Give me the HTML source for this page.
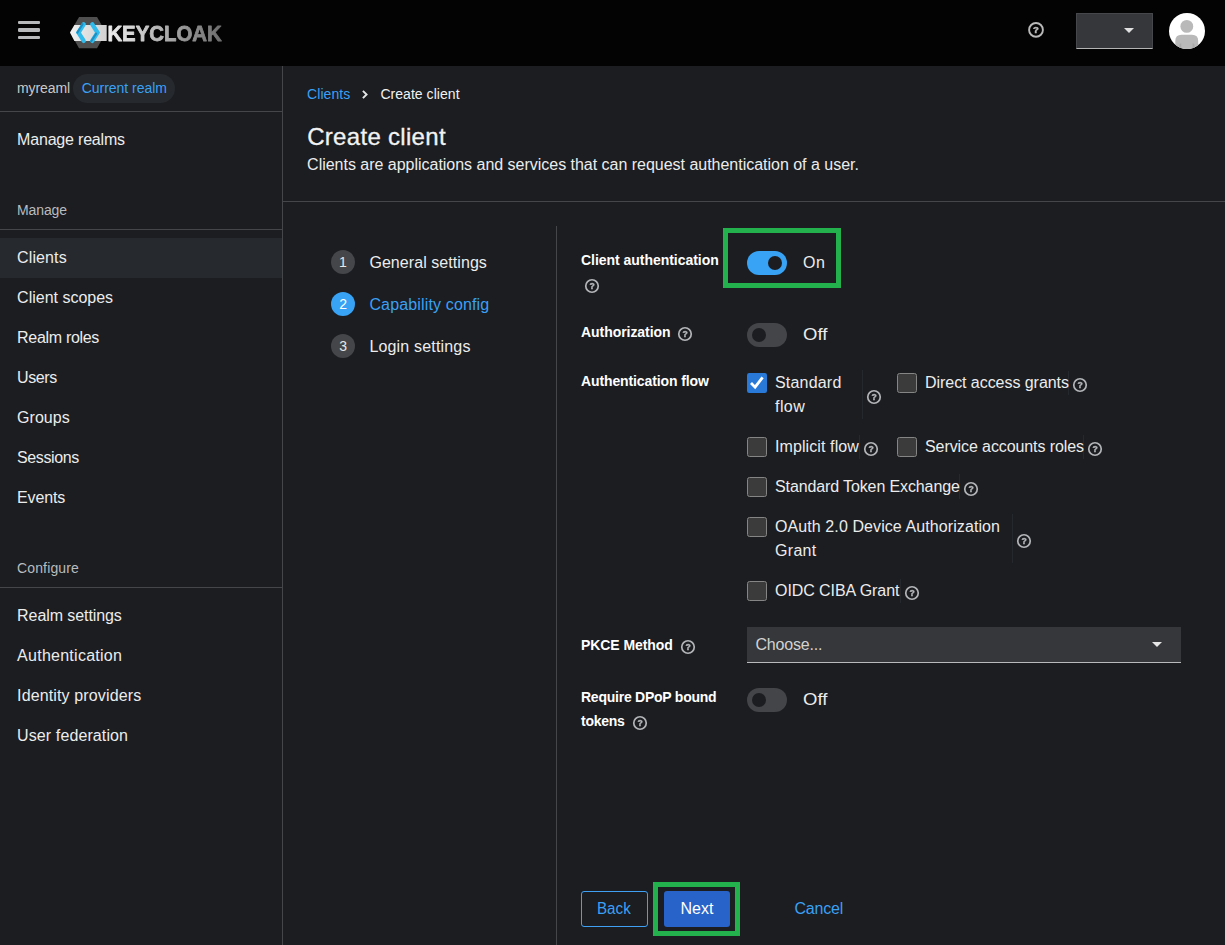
<!DOCTYPE html>
<html lang="en">
<head>
<meta charset="utf-8">
<title>Keycloak - Create client</title>
<style>
*{box-sizing:border-box;margin:0;padding:0}
html,body{width:1225px;height:945px;overflow:hidden;background:#1b1d21}
body{font-family:"Liberation Sans",sans-serif;color:#ececec;position:relative;font-size:16px}
.abs{position:absolute;white-space:nowrap}
#header{position:absolute;left:0;top:0;width:1225px;height:66px;background:#030303}
.t{position:absolute;white-space:nowrap;line-height:24px;height:24px}
.hr{position:absolute;left:0;width:282px;height:1px;background:#44464a}
.cb{position:absolute;width:20px;height:20px;border:1px solid #858585;border-radius:2.5px;background:#3b3b3b}
.cb.on{border:0;background:#2879d8;border-radius:2.2px}
.cb svg{position:absolute;left:0;top:0}
.sw{position:absolute;left:747px;width:40px;height:24px;border-radius:12px;background:#444548}
.sw i{position:absolute;left:5px;top:5px;width:14px;height:14px;border-radius:7px;background:#1b1d21}
.sw.on{background:#38a2f4}
.sw.on i{left:21px}
.green{position:absolute;border:5px solid #22b14c}
.g{will-change:transform}
</style>
</head>
<body>
<nav id="sidebar">
<div class="abs" style="left:282px;top:66px;width:1px;height:879px;background:#44464a"></div>
<div class="abs" style="left:73px;top:74px;width:102px;height:29px;border-radius:15px;background:#26292d"></div>
<div class="hr" style="top:111px"></div>
<div class="hr" style="top:229px"></div>
<div class="hr" style="top:587px"></div>
<div class="abs" style="left:0;top:238px;width:282px;height:40px;background:#26292d"></div>
<div class="t" style="left:17.00px;top:76.0px;font-size:14px;color:#c9c9c9;letter-spacing:-0.083px;">myreaml</div>
<div class="t" style="left:81.80px;top:76.0px;font-size:14px;color:#3aa0f5;letter-spacing:-0.041px;">Current realm</div>
<div class="t" style="left:17.10px;top:127.5px;font-size:16px;color:#ececec;letter-spacing:-0.193px;">Manage realms</div>
<div class="t" style="left:17.00px;top:198.0px;font-size:14px;color:#b9bbbe;letter-spacing:-0.103px;">Manage</div>
<div class="t" style="left:17.10px;top:245.5px;font-size:16px;color:#ececec;letter-spacing:0.109px;">Clients</div>
<div class="t" style="left:17.10px;top:285.5px;font-size:16px;color:#ececec;letter-spacing:-0.007px;">Client scopes</div>
<div class="t" style="left:17.10px;top:325.5px;font-size:16px;color:#ececec;letter-spacing:-0.310px;">Realm roles</div>
<div class="t" style="left:17.10px;top:365.5px;font-size:16px;color:#ececec;letter-spacing:-0.405px;">Users</div>
<div class="t" style="left:17.10px;top:405.5px;font-size:16px;color:#ececec;letter-spacing:0.018px;">Groups</div>
<div class="t" style="left:17.10px;top:445.5px;font-size:16px;color:#ececec;letter-spacing:-0.395px;">Sessions</div>
<div class="t" style="left:17.10px;top:485.5px;font-size:16px;color:#ececec;letter-spacing:-0.171px;">Events</div>
<div class="t" style="left:17.10px;top:603.5px;font-size:16px;color:#ececec;letter-spacing:-0.082px;">Realm settings</div>
<div class="t" style="left:17.10px;top:643.5px;font-size:16px;color:#ececec;letter-spacing:0.259px;">Authentication</div>
<div class="t" style="left:17.10px;top:683.5px;font-size:16px;color:#ececec;letter-spacing:0.131px;">Identity providers</div>
<div class="t" style="left:17.10px;top:723.5px;font-size:16px;color:#ececec;letter-spacing:0.106px;">User federation</div>
<div class="t" style="left:17.00px;top:555.8px;font-size:14px;color:#b9bbbe;letter-spacing:0.147px;">Configure</div>
</nav>
<main id="main">
<section id="pagehead">
<div class="abs" style="left:283px;top:201px;width:942px;height:1px;background:#44464a"></div>
<svg class="abs" style="left:360px;top:88px" width="10" height="13" viewBox="0 0 10 13"><polyline points="2.9,2.8 6.6,6.5 2.9,10.2" fill="none" stroke="#e6e6e6" stroke-width="1.9"/></svg>
<div class="t" style="left:307.10px;top:82.3px;font-size:14px;color:#3aa0f5;letter-spacing:0.050px;">Clients</div>
<div class="t" style="left:380.40px;top:82.3px;font-size:14px;color:#f2f2f2;letter-spacing:0.046px;">Create client</div>
<div class="t" style="left:307.20px;top:125.4px;font-size:24px;color:#f2f2f2;letter-spacing:0.303px;-webkit-text-stroke:0.3px #f2f2f2;">Create client</div>
<div class="t" style="left:307.10px;top:152.6px;font-size:16px;color:#ececec;letter-spacing:-0.018px;">Clients are applications and services that can request authentication of a user.</div>
</section>
<section id="wizardnav">
<div class="abs" style="left:556px;top:226px;width:1px;height:719px;background:#44464a"></div>
<div class="abs" style="left:331px;top:250px;width:24px;height:24px;border-radius:12px;background:#45464a"></div>
<div class="abs" style="left:331px;top:292px;width:24px;height:24px;border-radius:12px;background:#38a2f4"></div>
<div class="abs" style="left:331px;top:334px;width:24px;height:24px;border-radius:12px;background:#45464a"></div>
<div class="t" style="left:369.40px;top:250.5px;font-size:16px;color:#ececec;letter-spacing:0.063px;">General settings</div>
<div class="t" style="left:369.40px;top:292.5px;font-size:16px;color:#3aa0f5;letter-spacing:0.149px;">Capability config</div>
<div class="t" style="left:369.40px;top:334.5px;font-size:16px;color:#ececec;letter-spacing:0.179px;">Login settings</div>
<div class="t" style="left:339.01px;top:250.0px;font-size:14px;color:#e6e6e6;">1</div>
<div class="t" style="left:339.21px;top:292.0px;font-size:14px;color:#ffffff;">2</div>
<div class="t" style="left:339.21px;top:334.0px;font-size:14px;color:#e6e6e6;">3</div>
</section>
<section id="form">
<div class="green" style="left:723px;top:228px;width:118px;height:60px"></div>
<div class="sw on" style="top:251px"><i></i></div>
<div class="sw" style="top:323px"><i></i></div>
<div class="sw" style="top:688px"><i></i></div>
<div class="cb on" style="left:747px;top:373px"><svg width="20" height="20" viewBox="0 0 20 20"><polyline points="4.0,10.1 8.1,14.2 15.6,4.3" fill="none" stroke="#fff" stroke-width="2.8"/></svg></div>
<div class="cb" style="left:897px;top:373px"></div>
<div class="cb" style="left:747px;top:437px"></div>
<div class="cb" style="left:897px;top:437px"></div>
<div class="cb" style="left:747px;top:477px"></div>
<div class="cb" style="left:747px;top:517px"></div>
<div class="cb" style="left:747px;top:581px"></div>
<div class="abs" style="left:862px;top:370px;width:1px;height:49px;background:#25282d"></div>
<div class="abs" style="left:1068px;top:371px;width:1px;height:24px;background:#25282d"></div>
<div class="abs" style="left:859px;top:435px;width:1px;height:24px;background:#25282d"></div>
<div class="abs" style="left:1083px;top:435px;width:1px;height:24px;background:#25282d"></div>
<div class="abs" style="left:959px;top:474px;width:1px;height:25px;background:#25282d"></div>
<div class="abs" style="left:1012px;top:514px;width:1px;height:49px;background:#25282d"></div>
<div class="abs" style="left:900px;top:579px;width:1px;height:24px;background:#25282d"></div>
<div class="abs" style="left:747px;top:627px;width:434px;height:36px;background:#36373a;border-bottom:1px solid #b8babc"></div>
<div class="abs" style="left:1152px;top:642px;width:0;height:0;border-left:5.2px solid transparent;border-right:5.2px solid transparent;border-top:5.6px solid #e6e6e6"></div>
<div class="t" style="left:581.00px;top:248.2px;font-size:14px;font-weight:bold;color:#ffffff;letter-spacing:-0.035px;">Client authentication</div>
<div class="t" style="left:581.00px;top:320.2px;font-size:14px;font-weight:bold;color:#ffffff;letter-spacing:-0.055px;">Authorization</div>
<div class="t" style="left:581.00px;top:369.3px;font-size:14px;font-weight:bold;color:#ffffff;letter-spacing:-0.117px;">Authentication flow</div>
<div class="t" style="left:581.00px;top:633.2px;font-size:14px;font-weight:bold;color:#ffffff;letter-spacing:-0.073px;">PKCE Method</div>
<div class="t" style="left:581.00px;top:685.4px;font-size:14px;font-weight:bold;color:#ffffff;letter-spacing:-0.240px;">Require DPoP bound</div>
<div class="t" style="left:581.00px;top:709.4px;font-size:14px;font-weight:bold;color:#ffffff;letter-spacing:-0.244px;">tokens</div>
<div class="t" style="left:803.00px;top:250.6px;font-size:16px;color:#ececec;letter-spacing:0.435px;">On</div>
<div class="t" style="left:803.00px;top:322.6px;font-size:16px;color:#ececec;transform:scaleX(1.1574);transform-origin:0 50%;">Off</div>
<div class="t" style="left:803.00px;top:687.6px;font-size:16px;color:#ececec;transform:scaleX(1.1574);transform-origin:0 50%;">Off</div>
<div class="t" style="left:775.00px;top:370.5px;font-size:16px;color:#ececec;letter-spacing:0.192px;">Standard</div>
<div class="t" style="left:775.00px;top:394.5px;font-size:16px;color:#ececec;letter-spacing:0.434px;">flow</div>
<div class="t" style="left:925.00px;top:370.5px;font-size:16px;color:#ececec;letter-spacing:-0.051px;">Direct access grants</div>
<div class="t" style="left:775.00px;top:434.6px;font-size:16px;color:#ececec;letter-spacing:0.098px;">Implicit flow</div>
<div class="t" style="left:925.00px;top:434.6px;font-size:16px;color:#ececec;letter-spacing:-0.091px;">Service accounts roles</div>
<div class="t" style="left:775.00px;top:474.6px;font-size:16px;color:#ececec;letter-spacing:-0.115px;">Standard Token Exchange</div>
<div class="t" style="left:775.00px;top:514.6px;font-size:16px;color:#ececec;letter-spacing:0.091px;">OAuth 2.0 Device Authorization</div>
<div class="t" style="left:775.00px;top:538.6px;font-size:16px;color:#ececec;letter-spacing:0.307px;">Grant</div>
<div class="t" style="left:775.00px;top:578.6px;font-size:16px;color:#ececec;letter-spacing:-0.065px;">OIDC CIBA Grant</div>
<div class="t" style="left:755.40px;top:632.8px;font-size:16px;color:#d2d2d2;letter-spacing:-0.185px;">Choose...</div>
</section>
<footer id="wizardfooter">
<div class="green" style="left:653px;top:882px;width:87px;height:54px"></div>
<div class="abs" style="left:581px;top:891px;width:67px;height:36px;border:1px solid #3fa0f4;border-radius:3px"></div>
<div class="abs" style="left:664px;top:891px;width:66px;height:36px;background:#2763c9;border-radius:3px"></div>
<div class="t" style="left:597.40px;top:896.7px;font-size:16px;color:#3aa0f5;transform:scaleX(0.9481);transform-origin:0 50%;">Back</div>
<div class="t" style="left:680.40px;top:896.7px;font-size:16px;color:#ffffff;letter-spacing:0.082px;">Next</div>
<div class="t" style="left:794.40px;top:896.7px;font-size:16px;color:#3aa0f5;letter-spacing:-0.182px;">Cancel</div>
</footer>
<div id="helpicons">
<svg class="abs g" style="left:584.0px;top:278.0px" width="16" height="16" viewBox="0 0 16 16"><circle cx="8" cy="8" r="6.25" fill="none" stroke="#b3b5b8" stroke-width="1.7"/><text x="8" y="11.10" text-anchor="middle" font-family="Liberation Sans, sans-serif" font-weight="bold" font-size="8.6" fill="#b3b5b8" stroke="#b3b5b8" stroke-width="0.45">?</text></svg>
<svg class="abs g" style="left:677.0px;top:326.0px" width="16" height="16" viewBox="0 0 16 16"><circle cx="8" cy="8" r="6.25" fill="none" stroke="#b3b5b8" stroke-width="1.7"/><text x="8" y="11.10" text-anchor="middle" font-family="Liberation Sans, sans-serif" font-weight="bold" font-size="8.6" fill="#b3b5b8" stroke="#b3b5b8" stroke-width="0.45">?</text></svg>
<svg class="abs g" style="left:866.0px;top:389.0px" width="16" height="16" viewBox="0 0 16 16"><circle cx="8" cy="8" r="6.25" fill="none" stroke="#b3b5b8" stroke-width="1.7"/><text x="8" y="11.10" text-anchor="middle" font-family="Liberation Sans, sans-serif" font-weight="bold" font-size="8.6" fill="#b3b5b8" stroke="#b3b5b8" stroke-width="0.45">?</text></svg>
<svg class="abs g" style="left:1072.0px;top:377.0px" width="16" height="16" viewBox="0 0 16 16"><circle cx="8" cy="8" r="6.25" fill="none" stroke="#b3b5b8" stroke-width="1.7"/><text x="8" y="11.10" text-anchor="middle" font-family="Liberation Sans, sans-serif" font-weight="bold" font-size="8.6" fill="#b3b5b8" stroke="#b3b5b8" stroke-width="0.45">?</text></svg>
<svg class="abs g" style="left:863.0px;top:441.0px" width="16" height="16" viewBox="0 0 16 16"><circle cx="8" cy="8" r="6.25" fill="none" stroke="#b3b5b8" stroke-width="1.7"/><text x="8" y="11.10" text-anchor="middle" font-family="Liberation Sans, sans-serif" font-weight="bold" font-size="8.6" fill="#b3b5b8" stroke="#b3b5b8" stroke-width="0.45">?</text></svg>
<svg class="abs g" style="left:1087.0px;top:441.0px" width="16" height="16" viewBox="0 0 16 16"><circle cx="8" cy="8" r="6.25" fill="none" stroke="#b3b5b8" stroke-width="1.7"/><text x="8" y="11.10" text-anchor="middle" font-family="Liberation Sans, sans-serif" font-weight="bold" font-size="8.6" fill="#b3b5b8" stroke="#b3b5b8" stroke-width="0.45">?</text></svg>
<svg class="abs g" style="left:963.0px;top:481.0px" width="16" height="16" viewBox="0 0 16 16"><circle cx="8" cy="8" r="6.25" fill="none" stroke="#b3b5b8" stroke-width="1.7"/><text x="8" y="11.10" text-anchor="middle" font-family="Liberation Sans, sans-serif" font-weight="bold" font-size="8.6" fill="#b3b5b8" stroke="#b3b5b8" stroke-width="0.45">?</text></svg>
<svg class="abs g" style="left:1016.0px;top:533.0px" width="16" height="16" viewBox="0 0 16 16"><circle cx="8" cy="8" r="6.25" fill="none" stroke="#b3b5b8" stroke-width="1.7"/><text x="8" y="11.10" text-anchor="middle" font-family="Liberation Sans, sans-serif" font-weight="bold" font-size="8.6" fill="#b3b5b8" stroke="#b3b5b8" stroke-width="0.45">?</text></svg>
<svg class="abs g" style="left:904.0px;top:585.0px" width="16" height="16" viewBox="0 0 16 16"><circle cx="8" cy="8" r="6.25" fill="none" stroke="#b3b5b8" stroke-width="1.7"/><text x="8" y="11.10" text-anchor="middle" font-family="Liberation Sans, sans-serif" font-weight="bold" font-size="8.6" fill="#b3b5b8" stroke="#b3b5b8" stroke-width="0.45">?</text></svg>
<svg class="abs g" style="left:680.0px;top:639.0px" width="16" height="16" viewBox="0 0 16 16"><circle cx="8" cy="8" r="6.25" fill="none" stroke="#b3b5b8" stroke-width="1.7"/><text x="8" y="11.10" text-anchor="middle" font-family="Liberation Sans, sans-serif" font-weight="bold" font-size="8.6" fill="#b3b5b8" stroke="#b3b5b8" stroke-width="0.45">?</text></svg>
<svg class="abs g" style="left:632.0px;top:715.0px" width="16" height="16" viewBox="0 0 16 16"><circle cx="8" cy="8" r="6.25" fill="none" stroke="#b3b5b8" stroke-width="1.7"/><text x="8" y="11.10" text-anchor="middle" font-family="Liberation Sans, sans-serif" font-weight="bold" font-size="8.6" fill="#b3b5b8" stroke="#b3b5b8" stroke-width="0.45">?</text></svg>
</div>
</main>
<header id="header">
<!-- hamburger -->
<div class="abs" style="left:18.2px;top:20.8px;width:21.5px;height:3.3px;background:#b7b9bb;border-radius:1px"></div>
<div class="abs" style="left:18.2px;top:28.2px;width:21.5px;height:3.6px;background:#b7b9bb;border-radius:1.2px"></div>
<div class="abs" style="left:18.2px;top:35.8px;width:21.5px;height:3.3px;background:#b7b9bb;border-radius:1px"></div>
<!-- logo -->
<svg class="abs g" style="left:68px;top:14px" width="160" height="38" viewBox="0 0 160 38">
<defs>
<linearGradient id="band" x1="0" y1="0" x2="1" y2="0"><stop offset="0" stop-color="#f2f2f2"/><stop offset="0.5" stop-color="#dedede"/><stop offset="1" stop-color="#d2d2d2"/></linearGradient>
<linearGradient id="txt" gradientUnits="userSpaceOnUse" x1="40" y1="0" x2="154" y2="0"><stop offset="0" stop-color="#ececec"/><stop offset="0.25" stop-color="#cfcfcf"/><stop offset="0.6" stop-color="#a0a0a0"/><stop offset="1" stop-color="#6c6c6c"/></linearGradient>
</defs>
<polygon points="11.05,3.1 29.05,3.1 38,18.6 29.05,34.2 11.05,34.2 2.1,18.6" fill="#4f4f4f"/>
<polygon points="2,18.6 6.4,11 38.7,11 38.7,27.1 6.4,27.1" fill="url(#band)"/>
<polyline points="15.7,10.3 10.5,18.6 15.7,26.9" fill="none" stroke="#2fbbec" stroke-width="4.3" stroke-linecap="round" stroke-linejoin="miter"/>
<polyline points="14.6,10.1 9.3,18.6" fill="none" stroke="#1b8fc3" stroke-width="2" stroke-linecap="round"/>
<polyline points="24.3,10.3 29.5,18.6 24.3,26.9" fill="none" stroke="#2fbbec" stroke-width="4.3" stroke-linecap="round" stroke-linejoin="miter"/>
<polyline points="28.2,19.6 23.2,27.1" fill="none" stroke="#1b8fc3" stroke-width="2" stroke-linecap="round"/>
<text x="39.4" y="26.6" font-family="Liberation Sans, sans-serif" font-weight="bold" font-size="21.4" fill="url(#txt)" stroke="url(#txt)" stroke-width="0.8" stroke-linejoin="round" textLength="114.4" lengthAdjust="spacingAndGlyphs">KEYCLOAK</text>
</svg>
<!-- help -->
<svg class="abs g" style="left:1028px;top:22px" width="16" height="16" viewBox="0 0 16 16"><circle cx="8" cy="7.9" r="6.9" fill="none" stroke="#b9b9b9" stroke-width="1.9"/><text x="8" y="11.3" text-anchor="middle" font-family="Liberation Sans, sans-serif" font-weight="bold" font-size="9.5" fill="#b9b9b9" stroke="#b9b9b9" stroke-width="0.5">?</text></svg>
<!-- user dropdown -->
<div class="abs" style="left:1076px;top:13px;width:77px;height:36px;background:#36373a;border:1px solid #45474a;border-bottom-color:#b4b4b4"></div>
<div class="abs" style="left:1124px;top:28px;width:0;height:0;border-left:5px solid transparent;border-right:5px solid transparent;border-top:5px solid #e0e0e0"></div>
<!-- avatar -->
<svg class="abs" style="left:1169px;top:13px" width="36" height="36" viewBox="0 0 36 36"><defs><clipPath id="av"><circle cx="18" cy="18" r="18"/></clipPath></defs><circle cx="18" cy="18" r="18" fill="#fff"/><g clip-path="url(#av)"><circle cx="17.8" cy="13.4" r="6.4" fill="#b9b9b9"/><path d="M6.3 37 V28 Q6.3 21.8 12.5 21.8 H23 Q29.2 21.8 29.2 28 V37 Z" fill="#b9b9b9"/><path d="M10.4 37 V32 Q10.6 30.4 12.2 30.2 V37 Z M23.6 30.2 Q25.3 30.4 25.5 32 V37 H23.6 Z" fill="#a9a9a9"/></g></svg>
</header>
</body>
</html>
